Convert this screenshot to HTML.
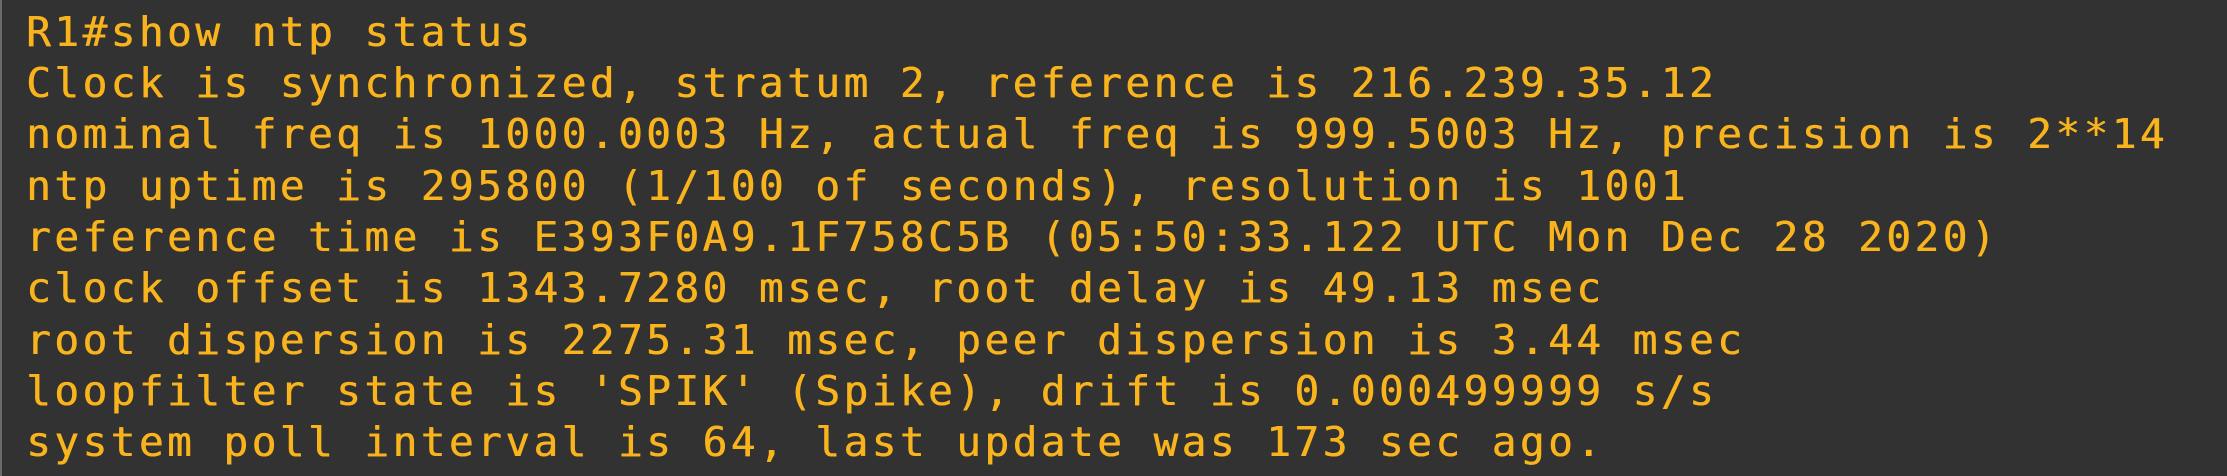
<!DOCTYPE html>
<html><head><meta charset="utf-8"><style>
html,body{margin:0;padding:0;}
body{width:2227px;height:476px;background:#323232;overflow:hidden;position:relative;}
.edge{position:absolute;left:0;top:0;width:2px;height:476px;background:#6a6a6a;}
.l{position:absolute;left:26px;white-space:pre;font-family:"DejaVu Sans Mono","Liberation Mono",monospace;font-size:41px;letter-spacing:3.5px;line-height:41px;color:#f9b41d;text-shadow:0.6px 0 0 #f9b41d;}
</style></head><body><div class="edge"></div>
<div class="l" style="top:12px">R1#show ntp status</div>
<div class="l" style="top:63px">Clock is synchronized, stratum 2, reference is 216.239.35.12</div>
<div class="l" style="top:114px">nominal freq is 1000.0003 Hz, actual freq is 999.5003 Hz, precision is 2**14</div>
<div class="l" style="top:166px">ntp uptime is 295800 (1/100 of seconds), resolution is 1001</div>
<div class="l" style="top:217px">reference time is E393F0A9.1F758C5B (05:50:33.122 UTC Mon Dec 28 2020)</div>
<div class="l" style="top:268px">clock offset is 1343.7280 msec, root delay is 49.13 msec</div>
<div class="l" style="top:320px">root dispersion is 2275.31 msec, peer dispersion is 3.44 msec</div>
<div class="l" style="top:371px">loopfilter state is 'SPIK' (Spike), drift is 0.000499999 s/s</div>
<div class="l" style="top:422px">system poll interval is 64, last update was 173 sec ago.</div>
</body></html>
